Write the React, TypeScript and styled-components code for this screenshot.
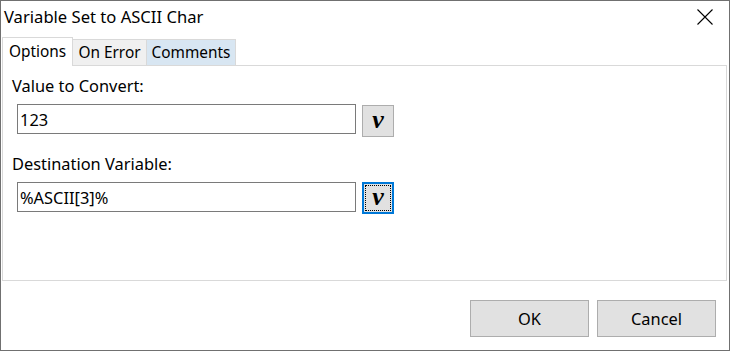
import styled, { createGlobalStyle } from "styled-components";

const GlobalStyle = createGlobalStyle`
  html, body {
    margin: 0;
    padding: 0;
    background: #ffffff;
  }
  * {
    box-sizing: border-box;
  }
`;

const tabs = [
  { label: "Options", width: 71 },
  { label: "On Error", width: 74 },
  { label: "Comments", width: 89 },
];

function App() {
  return (
    <>
      <GlobalStyle />
      <Window>
        <TitleBar>
          <Title>Variable Set to ASCII Char</Title>
          <CloseButton>
            <svg width="16" height="16" viewBox="0 0 16 16">
              <path d="M0.5 0.5 L15.5 15.5 M15.5 0.5 L0.5 15.5" stroke="#000" strokeWidth="1.1" />
            </svg>
          </CloseButton>
        </TitleBar>

        <Body>
          <TabStrip>
            {tabs.map((t, i) => (
              <Tab key={t.label} width={t.width} active={i === 0} hover={i === 2}>
                {t.label}
              </Tab>
            ))}
          </TabStrip>

          <Panel>
            <Label>Value to Convert:</Label>
            <FieldRow>
              <TextBox defaultValue="123" />
              <VarButton>v</VarButton>
            </FieldRow>

            <Label>Destination Variable:</Label>
            <FieldRow>
              <TextBox defaultValue="%ASCII[3]%" />
              <VarButton focused>
                <FocusRect>v</FocusRect>
              </VarButton>
            </FieldRow>
          </Panel>

          <Footer>
            <DialogButton>OK</DialogButton>
            <DialogButton>Cancel</DialogButton>
          </Footer>
        </Body>
      </Window>
    </>
  );
}

const Window = styled.div`
  width: 730px;
  height: 351px;
  border: 1px solid #707070;
  background: #ffffff;
  display: flex;
  flex-direction: column;
  font-family: "Noto Sans", "Open Sans", sans-serif;
  color: #000;
`;

const TitleBar = styled.div`
  height: 36px;
  display: flex;
  align-items: center;
  padding: 0 16px 0 3px;
`;

const Title = styled.div`
  flex: 1;
  font-size: 16.6px;
  margin-top: -5px;
`;

const CloseButton = styled.div`
  width: 16px;
  height: 16px;
  display: flex;
  margin-top: -5px;
`;

const Body = styled.div`
  flex: 1;
  display: flex;
  flex-direction: column;
  padding: 0 2px 0 1px;
`;

const TabStrip = styled.div`
  display: flex;
  align-items: flex-end;
  height: 28px;
`;

const Tab = styled.div<{ width: number; active?: boolean; hover?: boolean }>`
  width: ${(p) => p.width}px;
  height: ${(p) => (p.active ? "29px" : "26px")};
  margin-bottom: ${(p) => (p.active ? "-1px" : "0")};
  padding-bottom: ${(p) => (p.active ? "2px" : "0")};
  display: flex;
  align-items: center;
  justify-content: center;
  font-size: 15.4px;
  border: 1px solid #d9d9d9;
  border-bottom: none;
  border-left: ${(p) => (p.active ? "1px solid #d9d9d9" : "none")};
  background: ${(p) => (p.active ? "#ffffff" : p.hover ? "#d8e6f2" : "#f0f0f0")};
  position: relative;
  z-index: ${(p) => (p.active ? 1 : 0)};
`;

const Panel = styled.div`
  height: 216px;
  border: 1px solid #d9d9d9;
  padding: 9px 0 0 9px;
  display: flex;
  flex-direction: column;
`;

const Label = styled.div`
  font-size: 16.4px;
  line-height: 22px;
  margin-bottom: 7px;
`;

const FieldRow = styled.div`
  display: flex;
  align-items: flex-start;
  gap: 6px;
  padding-left: 5px;
  margin-bottom: 16px;
`;

const TextBox = styled.input`
  width: 339px;
  height: 30px;
  border: 1px solid #7a7a7a;
  padding: 0 2px;
  font-family: "Noto Sans", "Open Sans", sans-serif;
  font-size: 16.4px;
  color: #000;
  outline: none;
  background: #fff;
`;

const VarButton = styled.div<{ focused?: boolean }>`
  width: 32px;
  height: 32px;
  margin-top: ${(p) => (p.focused ? "0" : "1px")};
  background: #e1e1e1;
  border: ${(p) => (p.focused ? "2px solid #0078d7" : "1px solid #adadad")};
  display: flex;
  align-items: center;
  justify-content: center;
  font-family: "Liberation Serif", "Times New Roman", serif;
  font-style: italic;
  font-weight: bold;
  font-size: 26px;
  line-height: 1;
  padding-bottom: 3px;
`;

const FocusRect = styled.div`
  width: 26px;
  height: 26px;
  border: 1px dotted #000;
  display: flex;
  align-items: center;
  justify-content: center;
  padding-bottom: 2px;
  margin-top: 3px;
`;

const Footer = styled.div`
  flex: 1;
  display: flex;
  justify-content: flex-end;
  align-items: flex-start;
  gap: 8px;
  padding: 19px 11px 0 0;
`;

const DialogButton = styled.div`
  width: 119px;
  height: 37px;
  background: #e1e1e1;
  border: 1px solid #adadad;
  display: flex;
  align-items: center;
  justify-content: center;
  font-size: 16.4px;
`;

export default App;
